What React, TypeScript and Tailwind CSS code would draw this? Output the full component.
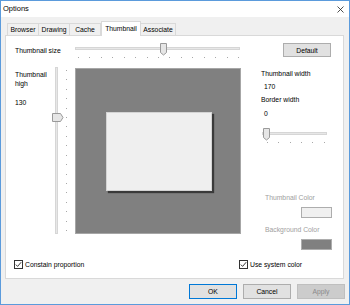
import React from "react";

const font = "font-['Liberation_Sans',Arial,sans-serif]";

function HSlider({
  width,
  thumbX,
  ticks,
  tickStart,
  tickStep,
}: {
  width: number;
  thumbX: number;
  ticks: number;
  tickStart: number;
  tickStep: number;
}) {
  return (
    <svg width={width} height={16} className="block">
      <rect x={0.5} y={4.5} width={width - 1} height={2} fill="#e7e7e7" stroke="#d6d6d6" />
      {Array.from({ length: ticks }).map((_, i) => (
        <rect key={i} x={Math.round(tickStart + i * tickStep)} y={14} width={1} height={1} fill="#a8a8a8" />
      ))}
      <path
        d={`M${thumbX + 0.5} 0.5 H${thumbX + 6.5} V9.5 L${thumbX + 3.5} 12 L${thumbX + 0.5} 9.5 Z`}
        fill="#e6e6e6"
        stroke="#9a9a9a"
      />
    </svg>
  );
}

function VSlider() {
  return (
    <svg width={20} height={167} className="block">
      <rect x={4.5} y={0.5} width={2} height={166} fill="#e7e7e7" stroke="#d6d6d6" />
      {Array.from({ length: 18 }).map((_, i) => (
        <rect key={i} x={15} y={Math.round(3 + i * 9.41)} width={1} height={1} fill="#a8a8a8" />
      ))}
      <path d="M1.5 46.5 H9.5 L12 50.5 L9.5 54.5 H1.5 Z" fill="#e6e6e6" stroke="#9a9a9a" />
    </svg>
  );
}

function CheckBox({ label }: { label: string }) {
  return (
    <div className="flex items-center">
      <div className="w-[9px] h-[9px] border border-[#333333] bg-white flex items-center justify-center">
        <svg width={7} height={7} viewBox="0 0 7 7">
          <path d="M0.8 3.6 L2.6 5.4 L6.2 1.2" fill="none" stroke="#222" strokeWidth={0.9} />
        </svg>
      </div>
      <span className="ml-[2px] leading-[9px]">{label}</span>
    </div>
  );
}

function Button({ label, primary, disabled }: { label: string; primary?: boolean; disabled?: boolean }) {
  return (
    <div
      className={
        "w-[48px] h-[15px] flex items-center justify-center leading-[9px] " +
        (disabled
          ? "bg-[#cccccc] border border-[#bfbfbf] text-[#8a8a8a]"
          : primary
          ? "bg-[#e1e1e1] border-[1.5px] border-[#0078d7] text-black"
          : "bg-[#e1e1e1] border border-[#adadad] text-black")
      }
    >
      {label}
    </div>
  );
}

export default function App() {
  const tabs = [
    { name: "Browser", w: "w-[32px]" },
    { name: "Drawing", w: "w-[31px]" },
    { name: "Cache", w: "w-[31px]" },
    { name: "Thumbnail", w: "w-[40px]", active: true },
    { name: "Associate", w: "w-[35px]" },
  ];

  return (
    <div className={`${font} w-[350px] h-[305px] border border-[#5b9bdc] bg-[#f0f0f0] text-[6.8px] text-black flex flex-col overflow-hidden`}>
      {/* title bar */}
      <div className="h-[16px] bg-white flex items-start justify-between shrink-0">
        <span className="pl-[2px] pt-[3px] text-[7.5px] leading-[9px]">Options</span>
        <svg width={7} height={7} className="mt-[5px] mr-[5px]">
          <path d="M0.5 0.5 L6.5 6.5 M6.5 0.5 L0.5 6.5" stroke="#222" strokeWidth={0.8} />
        </svg>
      </div>

      <div className="flex flex-col px-[4px] pt-[4px]">
        {/* tabs */}
        <div className="flex items-end h-[14px] pl-[2px]">
          {tabs.map((t, i) =>
            t.active ? (
              <div
                key={t.name}
                className={`${t.w} h-[15px] -mb-px relative z-10 bg-white border border-b-0 border-[#d9d9d9] flex items-start justify-center pt-[2px] leading-[9px]`}
              >
                {t.name}
              </div>
            ) : (
              <div
                key={t.name}
                className={`${t.w} h-[12px] bg-[#f0f0f0] border-t border-r border-[#d9d9d9] ${i === 0 ? "border-l" : ""} flex items-center justify-center leading-[9px]`}
              >
                {t.name}
              </div>
            )
          )}
        </div>

        {/* panel */}
        <div className="h-[244px] w-[339px] bg-white border border-[#d9d9d9] flex flex-col">
          {/* size row */}
          <div className="flex items-start mt-[7px] pl-[9px]">
            <span className="w-[60px] mt-[2.5px] leading-[9px]">Thumbnail size</span>
            <HSlider width={165} thumbX={85} ticks={15} tickStart={3} tickStep={11.43} />
            <div className="ml-[43px] w-[48px] h-[14px] bg-[#e1e1e1] border border-[#adadad] flex items-center justify-center leading-[9px]">
              Default
            </div>
          </div>

          {/* main row */}
          <div className="flex items-start mt-[8px] pl-[9px]">
            <div className="w-[36px] pt-[2.5px] flex flex-col leading-[9px]">
              <span>Thumbnail</span>
              <span>high</span>
              <span className="mt-[10px]">130</span>
            </div>
            <VSlider />
            <div className="ml-[4px] mt-[1px] w-[166px] h-[166px] bg-[#808080] border border-[#a6a6a6] flex items-center justify-center">
              <div className="w-[106px] h-[79px] bg-[#efefef] border border-[#d4d4d4] ml-[2px] shadow-[2px_2px_1px_rgba(0,0,0,0.55)]" />
            </div>
            <div className="ml-[20px] w-[71px] flex flex-col leading-[9px]">
              <span className="mt-[1.5px]">Thumbnail width</span>
              <span className="mt-[4px] pl-[3px]">170</span>
              <span className="mt-[4px]">Border width</span>
              <span className="mt-[5px] pl-[3px]">0</span>
              <div className="mt-[10.5px] ml-[1px]">
                <HSlider width={65} thumbX={1} ticks={6} tickStart={5} tickStep={11.3} />
              </div>
              <span className="mt-[48.5px] pl-[4px] text-[#a0a0a0]">Thumbnail Color</span>
              <div className="mt-[5.5px] self-end w-[31px] h-[11px] bg-[#f0f0f0] border border-[#adadad]" />
              <span className="mt-[6.5px] pl-[4px] text-[#a0a0a0]">Background Color</span>
              <div className="mt-[5.5px] self-end w-[31px] h-[11px] bg-[#808080] border border-[#adadad]" />
            </div>
          </div>

          {/* checkboxes */}
          <div className="flex items-center mt-[10px] pl-[8px]">
            <div className="w-[225px]">
              <CheckBox label="Constain proportion" />
            </div>
            <CheckBox label="Use system color" />
          </div>
        </div>

        {/* buttons */}
        <div className="flex justify-end gap-[6px] mt-[5px] pr-[0px]">
          <Button label="OK" primary />
          <Button label="Cancel" />
          <Button label="Apply" disabled />
        </div>
      </div>
    </div>
  );
}
